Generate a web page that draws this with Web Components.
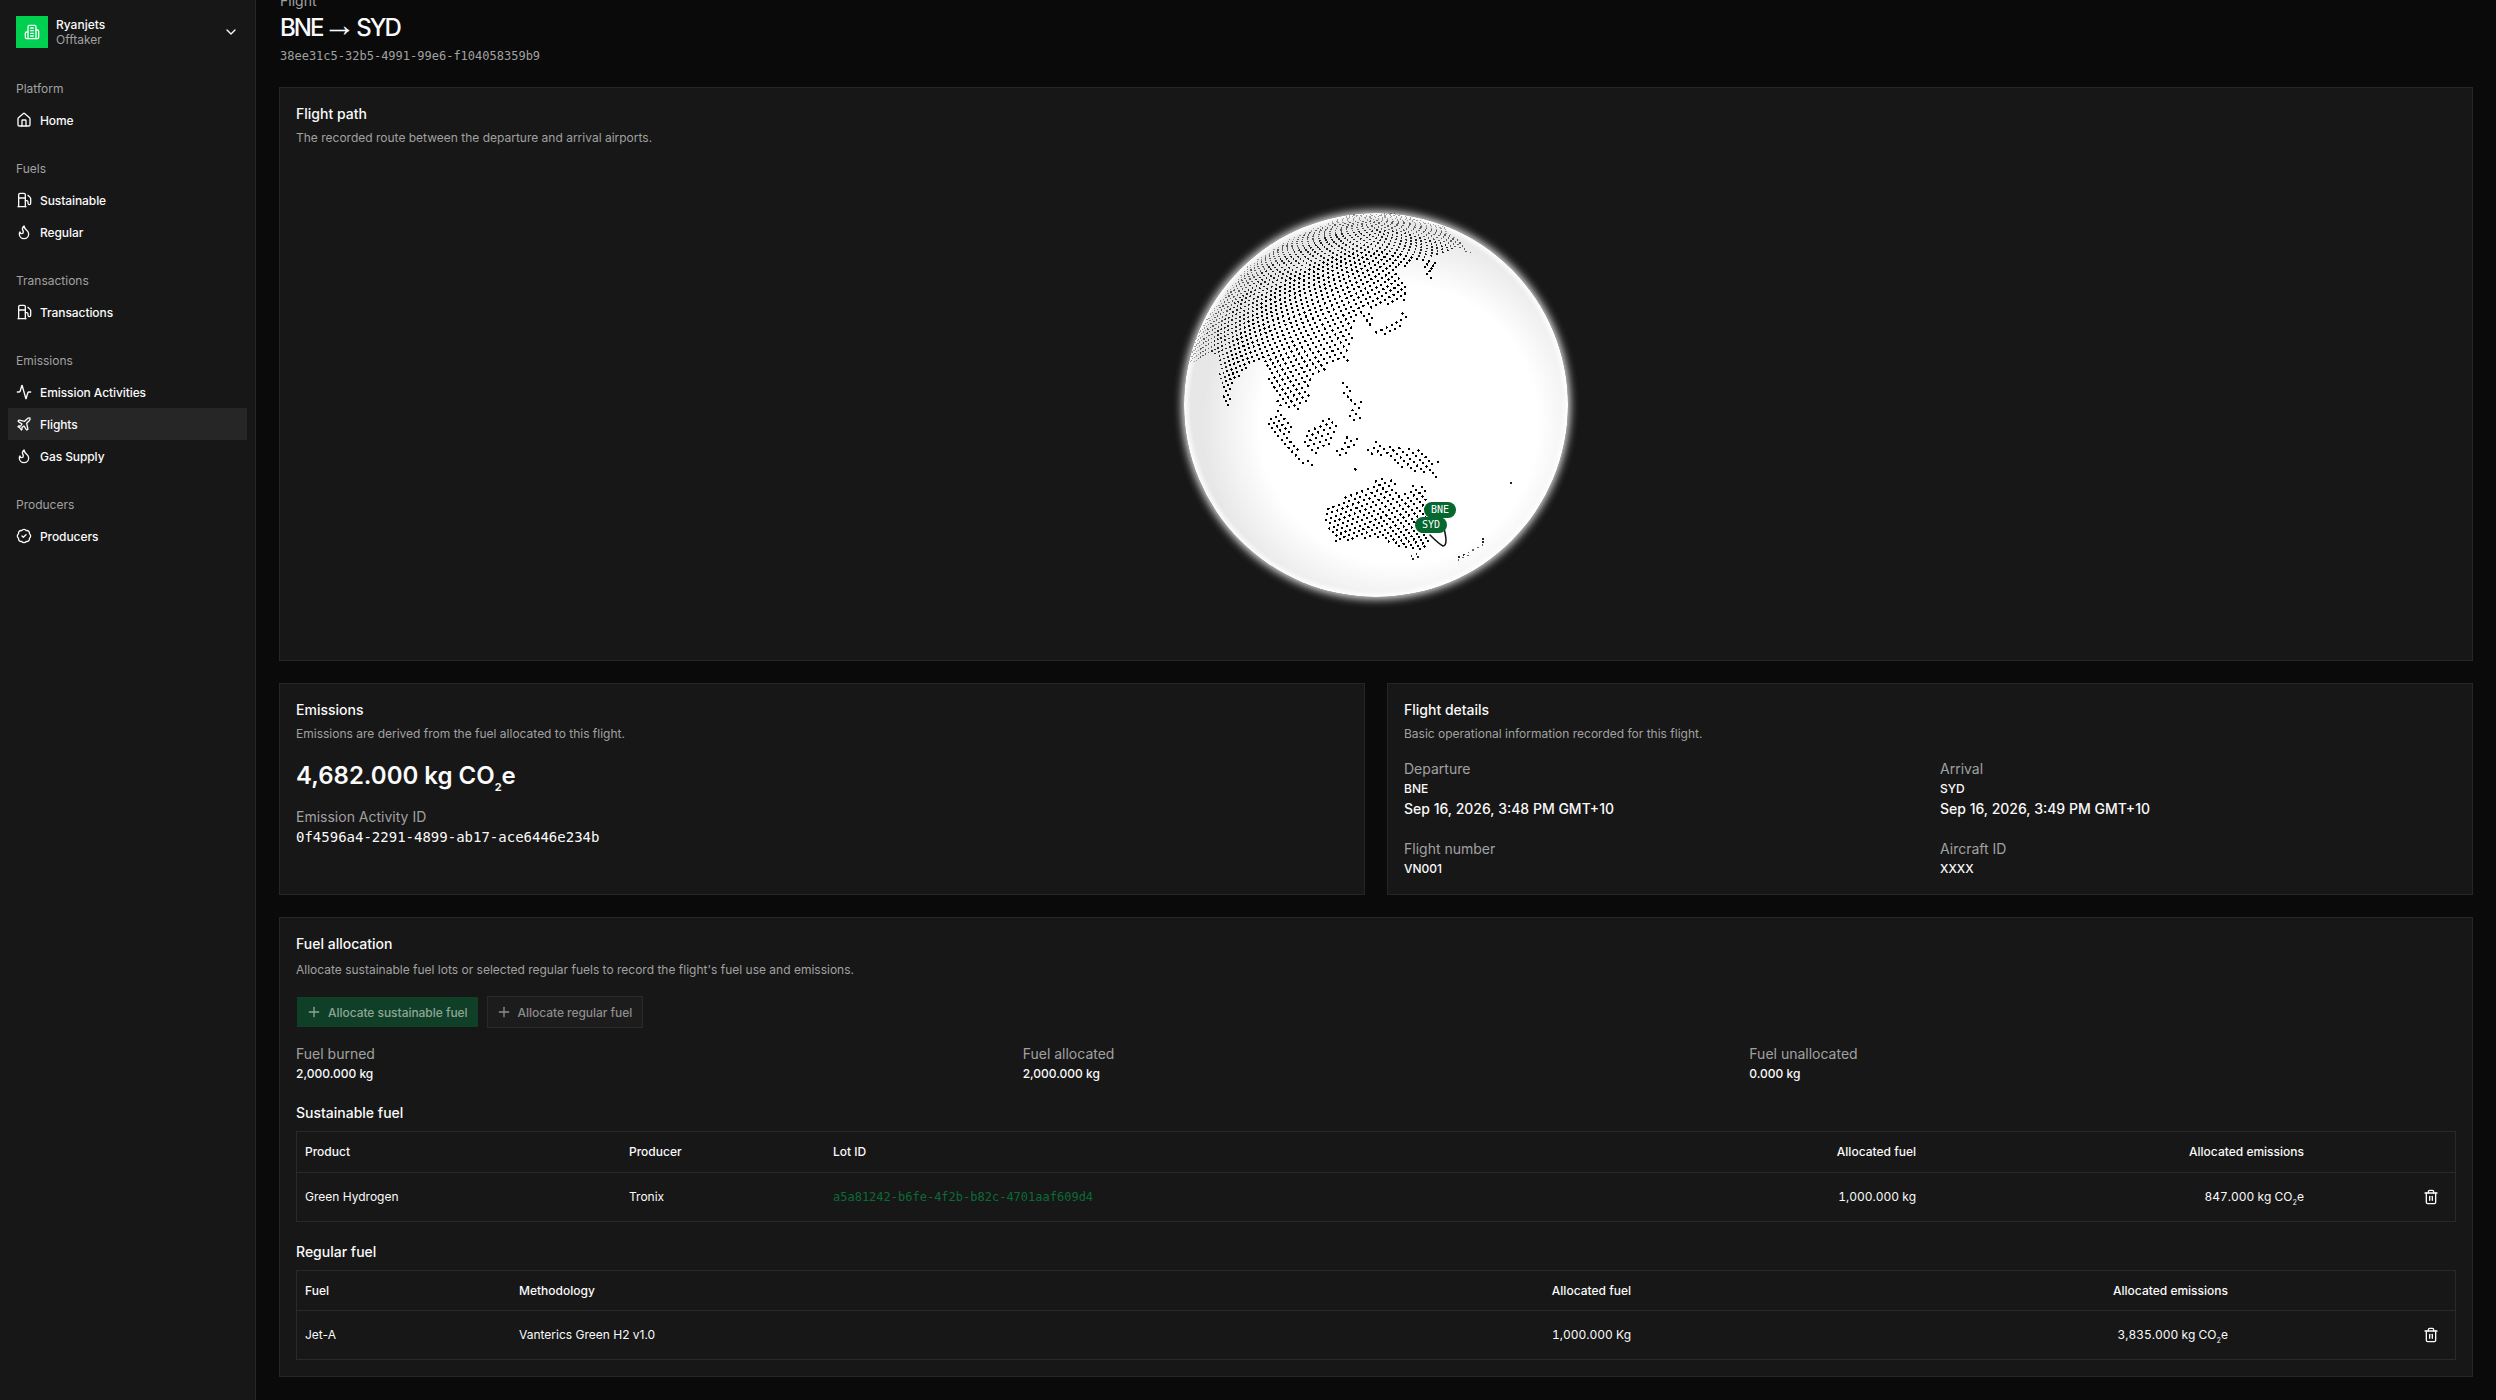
<!DOCTYPE html>
<html lang="en">
<head>
<meta charset="utf-8">
<title>Flight BNE to SYD</title>
<style>
    html, body { margin: 0; height: 100%; background: #0a0a0a; }
    body { font-family: Inter, "Noto Sans", sans-serif; color: #fafafa; font-size: 12px; overflow: hidden; }
</style>
</head>
<body>
<x-shell>
    <x-sidebar slot="side">
        <x-nav-group label="Platform">
            <x-nav-item icon="house">Home</x-nav-item>
        </x-nav-group>
        <x-nav-group label="Fuels">
            <x-nav-item icon="fuel">Sustainable</x-nav-item>
            <x-nav-item icon="flame">Regular</x-nav-item>
        </x-nav-group>
        <x-nav-group label="Transactions">
            <x-nav-item icon="fuel">Transactions</x-nav-item>
        </x-nav-group>
        <x-nav-group label="Emissions">
            <x-nav-item icon="activity">Emission Activities</x-nav-item>
            <x-nav-item icon="plane" active>Flights</x-nav-item>
            <x-nav-item icon="flame">Gas Supply</x-nav-item>
        </x-nav-group>
        <x-nav-group label="Producers">
            <x-nav-item icon="badge">Producers</x-nav-item>
        </x-nav-group>
    </x-sidebar>

    <x-page-head eyebrow="Flight" from="BNE" to="SYD" ident="38ee31c5-32b5-4991-99e6-f104058359b9"></x-page-head>

    <x-card heading="Flight path" note="The recorded route between the departure and arrival airports.">
        <x-globe></x-globe>
    </x-card>

    <x-two-up>
        <x-card heading="Emissions" note="Emissions are derived from the fuel allocated to this flight.">
            <x-emission-total activity="0f4596a4-2291-4899-ab17-ace6446e234b">4,682.000 kg CO<sub>2</sub>e</x-emission-total>
        </x-card>
        <x-card heading="Flight details" note="Basic operational information recorded for this flight.">
            <x-detail-grid>
                <x-stat label="Departure" value="BNE" extra="Sep 16, 2026, 3:48 PM GMT+10"></x-stat>
                <x-stat label="Arrival" value="SYD" extra="Sep 16, 2026, 3:49 PM GMT+10"></x-stat>
                <x-stat label="Flight number" value="VN001"></x-stat>
                <x-stat label="Aircraft ID" value="XXXX"></x-stat>
            </x-detail-grid>
        </x-card>
    </x-two-up>

    <x-card heading="Fuel allocation" note="Allocate sustainable fuel lots or selected regular fuels to record the flight's fuel use and emissions." loose>
        <x-button-row>
            <x-action-button primary>Allocate sustainable fuel</x-action-button>
            <x-action-button>Allocate regular fuel</x-action-button>
        </x-button-row>
        <x-stat-row>
            <x-stat label="Fuel burned" value="2,000.000 kg"></x-stat>
            <x-stat label="Fuel allocated" value="2,000.000 kg"></x-stat>
            <x-stat label="Fuel unallocated" value="0.000 kg"></x-stat>
        </x-stat-row>
        <x-fuel-table heading="Sustainable fuel" cols="324px 204px 875px 224px 388px 1fr" gap-top="21" head-h="41">
            <x-fuel-row head>
                <x-cell>Product</x-cell><x-cell>Producer</x-cell><x-cell>Lot ID</x-cell>
                <x-cell end>Allocated fuel</x-cell><x-cell end>Allocated emissions</x-cell><x-cell></x-cell>
            </x-fuel-row>
            <x-fuel-row>
                <x-cell>Green Hydrogen</x-cell><x-cell>Tronix</x-cell><x-cell mono>a5a81242-b6fe-4f2b-b82c-4701aaf609d4</x-cell>
                <x-cell end>1,000.000 kg</x-cell><x-cell end>847.000 kg CO<sub>2</sub>e</x-cell><x-cell end><x-icon name="trash"></x-icon></x-cell>
            </x-fuel-row>
        </x-fuel-table>
        <x-fuel-table heading="Regular fuel" cols="214px 800px 328px 597px 1fr" gap-top="20" head-h="40">
            <x-fuel-row head>
                <x-cell>Fuel</x-cell><x-cell>Methodology</x-cell>
                <x-cell end>Allocated fuel</x-cell><x-cell end>Allocated emissions</x-cell><x-cell></x-cell>
            </x-fuel-row>
            <x-fuel-row>
                <x-cell>Jet-A</x-cell><x-cell>Vanterics Green H2 v1.0</x-cell>
                <x-cell end>1,000.000 Kg</x-cell><x-cell end>3,835.000 kg CO<sub>2</sub>e</x-cell><x-cell end><x-icon name="trash"></x-icon></x-cell>
            </x-fuel-row>
        </x-fuel-table>
    </x-card>
</x-shell>

<script>
    const ICONS = {
        house: '<path d="M15 21v-8a1 1 0 0 0-1-1h-4a1 1 0 0 0-1 1v8"/><path d="M3 10a2 2 0 0 1 .709-1.528l7-5.999a2 2 0 0 1 2.582 0l7 5.999A2 2 0 0 1 21 10v9a2 2 0 0 1-2 2H5a2 2 0 0 1-2-2z"/>',
        fuel: '<line x1="3" x2="15" y1="22" y2="22"/><line x1="4" x2="14" y1="9" y2="9"/><path d="M14 22V4a2 2 0 0 0-2-2H6a2 2 0 0 0-2 2v18"/><path d="M14 13h2a2 2 0 0 1 2 2v2a2 2 0 0 0 2 2a2 2 0 0 0 2-2V9.83a2 2 0 0 0-.59-1.42L18 5"/>',
        flame: '<path d="M8.5 14.5A2.5 2.5 0 0 0 11 12c0-1.38-.5-2-1-3-1.072-2.143-.224-4.054 2-6 .5 2.5 2 4.9 4 6.5 2 1.6 3 3.5 3 5.5a7 7 0 1 1-14 0c0-1.153.433-2.294 1-3a2.5 2.5 0 0 0 2.5 2.5z"/>',
        activity: '<path d="M22 12h-2.48a2 2 0 0 0-1.93 1.46l-2.35 8.36a.25.25 0 0 1-.48 0L9.24 2.18a.25.25 0 0 0-.48 0l-2.35 8.36A2 2 0 0 1 4.49 12H2"/>',
        plane: '<path d="M17.8 19.2 16 11l3.5-3.5C21 6 21.5 4 21 3c-1-.5-3 0-4.5 1.5L13 8 4.8 6.2c-.5-.1-.9.1-1.1.5l-.3.5c-.2.5-.1 1 .3 1.3L9 12l-2 3H4l-1 1 3 2 2 3 1-1v-3l3-2 3.5 5.3c.3.4.8.5 1.3.3l.5-.2c.4-.3.6-.7.5-1.2z"/>',
        badge: '<path d="M3.85 8.62a4 4 0 0 1 4.78-4.77 4 4 0 0 1 6.74 0 4 4 0 0 1 4.78 4.78 4 4 0 0 1 0 6.74 4 4 0 0 1-4.77 4.78 4 4 0 0 1-6.75 0 4 4 0 0 1-4.78-4.77 4 4 0 0 1 0-6.76Z"/><path d="m9 12 2 2 4-4"/>',
        building: '<path d="M6 22V4a2 2 0 0 1 2-2h8a2 2 0 0 1 2 2v18Z"/><path d="M6 12H4a2 2 0 0 0-2 2v6a2 2 0 0 0 2 2h2"/><path d="M18 9h2a2 2 0 0 1 2 2v9a2 2 0 0 1-2 2h-2"/><path d="M10 6h4"/><path d="M10 10h4"/><path d="M10 14h4"/><path d="M10 18h4"/>',
        chevron: '<path d="m6 9 6 6 6-6"/>',
        plus: '<path d="M5 12h14"/><path d="M12 5v14"/>',
        trash: '<path d="M3 6h18"/><path d="M19 6v14c0 1-1 2-2 2H7c-1 0-2-1-2-2V6"/><path d="M8 6V4c0-1 1-2 2-2h4c1 0 2 1 2 2v2"/><line x1="10" x2="10" y1="11" y2="17"/><line x1="14" x2="14" y1="11" y2="17"/>'
    }

    const define = (name, css, html, setup) => {
        customElements.define(name, class extends HTMLElement {
            constructor() {
                super()
                this.attachShadow({mode: 'open'})
            }
            connectedCallback() {
                if (this.shadowRoot.firstChild) return
                const markup = typeof html === 'function' ? html(this) : html
                this.shadowRoot.innerHTML = `<style>${css}</style>${markup}`
                if (setup) setup(this)
            }
        })
    }

    define('x-icon', `
        :host { display: inline-flex; width: 16px; height: 16px; flex: none; }
        svg { width: 100%; height: 100%; fill: none; stroke: currentColor; stroke-width: 2; stroke-linecap: round; stroke-linejoin: round; }
    `, el => `<svg viewBox="0 0 24 24">${ICONS[el.getAttribute('name')]}</svg>`)

    define('x-shell', `
        :host { display: flex; height: 1400px; overflow: hidden; }
        main { flex: 1; min-width: 0; height: 1400px; box-sizing: border-box; padding: 0 24px 24px; display: flex; flex-direction: column; justify-content: flex-end; gap: 24px; overflow: hidden; }
    `, `<slot name="side"></slot><main><slot></slot></main>`)

    define('x-sidebar', `
        :host { display: flex; flex-direction: column; width: 256px; height: 1400px; flex: none; box-sizing: border-box; background: #171717; border-right: 1px solid #262626; padding-bottom: 8px; }
        .team { display: flex; align-items: center; gap: 8px; margin: 8px; padding: 8px; height: 48px; box-sizing: border-box; }
        .logo { width: 32px; height: 32px; background: #00d04f; color: #fff; display: flex; align-items: center; justify-content: center; flex: none; }
        .names { flex: 1; display: flex; flex-direction: column; font-size: 12px; line-height: 15px; }
        b { font-weight: 500; color: #fafafa; }
        span { color: #a1a1a1; }
    `, `
        <div class="team">
            <div class="logo"><x-icon name="building"></x-icon></div>
            <div class="names"><b>Ryanjets</b><span>Offtaker</span></div>
            <x-icon name="chevron"></x-icon>
        </div>
        <slot></slot>
    `)

    define('x-nav-group', `
        :host { display: block; padding: 8px; }
        .label { height: 32px; padding: 0 8px; display: flex; align-items: center; font-size: 12px; color: #a1a1a1; }
    `, el => `<div class="label">${el.getAttribute('label')}</div><slot></slot>`)

    define('x-nav-item', `
        :host { display: flex; align-items: center; gap: 8px; height: 32px; padding: 0 8px; font-size: 12px; font-weight: 500; letter-spacing: -.08px; color: #fafafa; }
        :host([active]) { background: #262626; }
    `, el => `<x-icon name="${el.getAttribute('icon')}"></x-icon><slot></slot>`)

    define('x-page-head', `
        :host { display: block; }
        .eyebrow { font-size: 14px; line-height: 20px; color: #a1a1a1; margin-bottom: 1px; }
        h1 { margin: 0; font-size: 24px; line-height: 32px; font-weight: 500; letter-spacing: -2px; word-spacing: -4px; color: #fafafa; }
        h1 span { font: 400 33px/0 "Liberation Sans", sans-serif; letter-spacing: 0; }
        code { display: block; margin-top: 4px; font: 12px/16px "DejaVu Sans Mono", monospace; color: #a1a1a1; }
    `, el => `
        <div class="eyebrow">${el.getAttribute('eyebrow')}</div>
        <h1>${el.getAttribute('from')} <span>→</span> ${el.getAttribute('to')}</h1>
        <code>${el.getAttribute('ident')}</code>
    `)

    define('x-card', `
        :host { display: block; box-sizing: border-box; background: #171717; box-shadow: 0 0 0 1px #262626; padding: 16px; min-width: 0; }
        h2 { margin: 0; font-size: 14px; line-height: 20px; font-weight: 500; color: #fafafa; }
        p { margin: 6px 0 0; font-size: 12px; line-height: 16px; color: #a1a1a1; }
        :host([loose]) p { margin-top: 8px; }
    `, el => `<h2>${el.getAttribute('heading')}</h2><p>${el.getAttribute('note')}</p><slot></slot>`)

    define('x-two-up', `
        :host { display: grid; grid-template-columns: 1fr 1fr; grid-template-rows: 210px; gap: 24px; }
    `, `<slot></slot>`)

    define('x-emission-total', `
        :host { display: block; margin-top: 18px; }
        .total { font-size: 24px; line-height: 32px; font-weight: 600; color: #fafafa; }
        ::slotted(sub) { font-size: 11px; font-weight: 700; line-height: 0; vertical-align: -7px; }
        .label { margin-top: 15px; font-size: 14px; line-height: 20px; color: #a1a1a1; }
        code { display: block; font: 400 14px/20px "DejaVu Sans Mono", monospace; color: #fafafa; }
    `, el => `
        <div class="total"><slot></slot></div>
        <div class="label">Emission Activity ID</div>
        <code>${el.getAttribute('activity')}</code>
    `)

    define('x-detail-grid', `
        :host { display: grid; grid-template-columns: 1fr 1fr; gap: 20px; margin-top: 17px; }
    `, `<slot></slot>`)

    define('x-stat', `
        :host { display: block; }
        .label { font-size: 14px; line-height: 20px; color: #a1a1a1; }
        .value { margin-top: 2px; font-size: 12px; line-height: 16px; font-weight: 500; color: #fafafa; }
        .extra { margin-top: 2px; font-size: 14px; line-height: 20px; font-weight: 500; color: #fafafa; }
    `, el => `
        <div class="label">${el.getAttribute('label')}</div>
        <div class="value">${el.getAttribute('value')}</div>
        ${el.hasAttribute('extra') ? `<div class="extra">${el.getAttribute('extra')}</div>` : ''}
    `)

    define('x-button-row', `
        :host { display: flex; gap: 8px; margin-top: 18px; }
    `, `<slot></slot>`)

    define('x-action-button', `
        :host { display: inline-flex; align-items: center; gap: 6px; height: 32px; box-sizing: border-box; padding: 0 10px 0 8px; font-size: 12px; font-weight: 500; letter-spacing: -.04px; border: 1px solid #2a2a2a; background: #1c1c1c; color: #8c8c8c; }
        :host([primary]) { background: #0f3f26; border-color: #171717; color: #8ea597; padding: 0 10px 0 9px; }
    `, `<x-icon name="plus"></x-icon><slot></slot>`)

    define('x-stat-row', `
        :host { display: grid; grid-template-columns: repeat(3, 1fr); gap: 20px; margin-top: 16px; }
    `, `<slot></slot>`)

    define('x-fuel-table', `
        :host { display: block; }
        h3 { margin: 0 0 8px; font-size: 14px; line-height: 20px; font-weight: 500; color: #fafafa; }
        .box { border: 1px solid #2a2a2a; }
    `, el => `
        <h3 style="margin-top:${el.getAttribute('gap-top')}px">${el.getAttribute('heading')}</h3>
        <div class="box" style="--cols:${el.getAttribute('cols')};--head-h:${el.getAttribute('head-h')}px"><slot></slot></div>
    `)

    define('x-fuel-row', `
        :host { display: grid; grid-template-columns: var(--cols); align-items: center; height: 48px; box-sizing: border-box; font-size: 12px; color: #fafafa; }
        :host([head]) { height: var(--head-h); font-weight: 500; border-bottom: 1px solid #2a2a2a; }
    `, `<slot></slot>`)

    define('x-cell', `
        :host { display: block; padding: 0 8px; line-height: 16px; }
        :host([end]) { text-align: right; font-variant-numeric: tabular-nums; }
        :host([mono]) { font-family: "DejaVu Sans Mono", monospace; color: #0b6b35; }
        ::slotted(sub) { font-size: 7px; line-height: 0; vertical-align: -4px; }
        ::slotted(x-icon) { margin: 0 8px 0 0; vertical-align: middle; }
    `, `<slot></slot>`)

    // outlines of the visible land, traced in 3x picture coordinates of the globe crop
    const LAND = [
        // asia and siberia
        [[88,522],[110,440],[150,370],[260,230],[400,140],[570,75],[700,70],[850,110],[955,205],[900,175],[850,188],[780,208],[700,245],[728,275],[745,305],[720,335],[640,352],[600,362],[578,400],[582,465],[560,500],[520,522],[455,562],[448,600],[445,635],[412,665],[352,642],[325,572],[318,530],[290,508],[215,590],[215,652],[198,660],[178,560],[175,488]],
        // kamchatka
        [[785,205],[825,215],[815,270],[800,268],[790,235]],
        // sakhalin, japan, korea
        [[715,325],[750,330],[735,345]],
        [[712,358],[742,378],[730,410],[660,440],[642,425],[700,395],[722,378]],
        [[600,362],[640,368],[635,405],[612,405]],
        // taiwan
        [[545,518],[572,500],[570,520],[550,526]],
        // philippines
        [[540,580],[565,572],[575,625],[612,632],[592,660],[610,668],[592,702],[562,680],[572,640],[545,610]],
        // sumatra, java
        [[315,700],[358,658],[398,700],[385,750],[418,780],[412,800],[482,825],[472,835],[420,825],[365,770]],
        // borneo
        [[428,735],[505,680],[542,712],[510,772],[468,792],[430,758]],
        // sulawesi
        [[528,785],[560,742],[612,748],[572,772],[568,812],[540,800]],
        // new guinea
        [[612,790],[648,755],[792,782],[842,858],[828,862],[718,832],[680,795],[620,798]],
        [[815,808],[852,806],[830,820]],
        // australia
        [[498,950],[600,900],[668,858],[708,868],[722,925],[765,875],[802,900],[800,990],[808,1075],[752,1082],[640,1040],[530,1058],[498,1005]],
        [[748,1092],[788,1092],[760,1112]],
        // new zealand
        [[890,1105],[960,1062],[965,1072],[895,1114]],
        [[962,1040],[974,1042],[972,1068],[962,1066]],
        // small islands
        [[940,938],[950,938],[950,948],[940,948]],
        [[1047,876],[1057,876],[1057,886],[1047,886]],
        [[585,837],[596,837],[596,848],[585,848]]
    ]

    const insidePoly = (x, y, poly) => {
        let hit = false
        for (let i = 0, j = poly.length - 1; i < poly.length; j = i++) {
            const [xi, yi] = poly[i], [xj, yj] = poly[j]
            if ((yi > y) !== (yj > y) && x < (xj - xi) * (y - yi) / (yj - yi) + xi) hit = !hit
        }
        return hit
    }

    const globeDots = () => {
        const COUNT = 15000, GOLDEN = Math.PI * (3 - Math.sqrt(5))
        const lat0 = 8 * Math.PI / 180, lon0 = 134 * Math.PI / 180
        const buckets = [[], [], [], []]
        for (let i = 0; i < COUNT; i++) {
            const y = 1 - 2 * (i + .5) / COUNT
            const r = Math.sqrt(1 - y * y)
            const lon = i * GOLDEN - lon0
            const x = r * Math.sin(lon), z = r * Math.cos(lon)
            const sy = y * Math.cos(lat0) - z * Math.sin(lat0)
            const sz = y * Math.sin(lat0) + z * Math.cos(lat0)
            if (sz <= 0.04) continue
            const px = 648 + 576 * x, py = 643 - 576 * sy
            if (!LAND.some(poly => insidePoly(px, py, poly))) continue
            const rx = px / 3, ry = py / 3
            const b = sz > .6 ? 0 : sz > .42 ? 1 : sz > .28 ? 2 : 3
            const d = [1.2, 1, .85, .7][b]
            buckets[b].push(`M${(rx - d).toFixed(1)} ${ry.toFixed(1)}a${d} ${d} 0 1 0 ${2 * d} 0a${d} ${d} 0 1 0 ${-2 * d} 0z`)
        }
        return buckets.map((b, i) => `<path d="${b.join('')}" fill="#000" opacity="${[1, .85, .6, .35][i]}" shape-rendering="crispEdges"/>`).join('')
    }

    define('x-globe', `
        :host { display: flex; justify-content: center; padding: 67px 0 47px; }
        .ball { position: relative; width: 384px; height: 384px; border-radius: 50%;
            background:
                radial-gradient(circle closest-side at center, transparent 96.5%, #fff 100%),
                radial-gradient(circle 205px at 56% 55%, #fff 68%, #e7e7e7 96%);
            box-shadow: 0 0 8px 2px rgba(255,255,255,.9); }
        svg { position: absolute; left: -24px; top: -23px; width: 420px; height: 420px; }
        .pin { position: absolute; width: 32px; height: 16px; border-radius: 8px; background: #06672f; color: #fff; font: 400 10px/16px "DejaVu Sans Mono", monospace; text-align: center; }
    `, () => `
        <div class="ball">
            <svg viewBox="0 0 420 420">
                ${globeDots()}
                <path d="M270 345c4 4 9 9 13 11 2 0 3-2 3-6 0-3-1-7-2-12" fill="none" stroke="#111" stroke-width="1.5" stroke-linecap="round"/>
            </svg>
            <div class="pin" style="left:240px;top:289px">BNE</div>
            <div class="pin" style="left:231px;top:304px">SYD</div>
        </div>
    `)
</script>
</body>
</html>
